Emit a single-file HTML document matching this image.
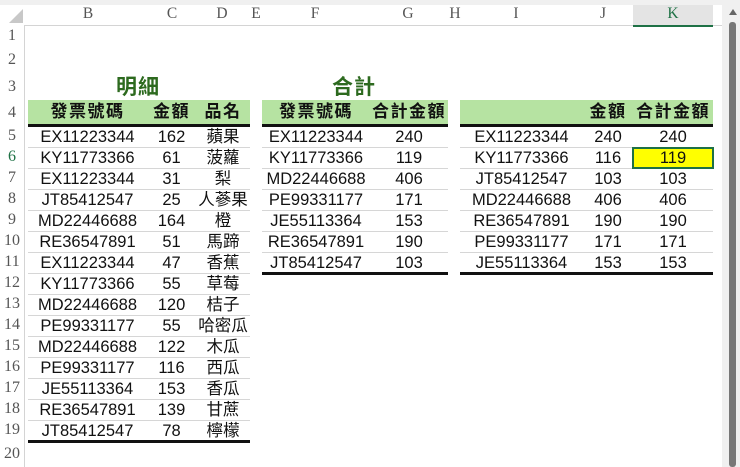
<!DOCTYPE html><html><head><meta charset="utf-8"><style>
body{margin:0;width:740px;height:467px;background:#fff;position:relative;overflow:hidden;font-family:"Liberation Sans","Noto Sans CJK TC",sans-serif;}
.ab{position:absolute}
.colh{position:absolute;top:0;height:25px;background:#fff;border-bottom:1px solid #d4d4d4;width:722px;left:0}
.ch{position:absolute;top:5px;font-family:"Liberation Serif",serif;font-size:15.5px;color:#555;transform:translateX(-50%)}
.rh{position:absolute;left:0;width:24px;border-right:1px solid #d4d4d4;top:25px;height:442px;background:#fff}
.rn{position:absolute;left:0;width:24px;text-align:center;font-family:"Liberation Serif",serif;font-size:16px;color:#555;transform:translateY(-50%)}
.t{position:absolute;top:100px;font-size:16.5px;color:#111}
.r{display:flex;height:20px;line-height:21px;border-bottom:1px solid #d6d6d6}
.r div{text-align:center;white-space:nowrap}
.h{height:24px;line-height:24px;background:#b6e3a2;font-weight:bold;border-bottom:3px solid #111;font-size:17px;letter-spacing:1.5px}
.last{border-bottom:3px solid #111;height:19px}
.title{position:absolute;top:71px;font-size:21px;font-weight:bold;color:#2d6a1f;letter-spacing:1px}
</style></head><body>
<div class="colh"></div>
<div class="ab" style="left:633px;top:4px;width:80px;height:21px;background:#e4e4e4;border-bottom:2px solid #1e7145"></div>
<div class="ab" style="left:0;top:0;width:740px;height:5px;background:#f0f0f0"></div>
<svg class="ab" style="left:8px;top:8px" width="16" height="16"><polygon points="15,1 15,15 1,15" fill="#c8c8c8"/></svg>
<div class="ch" style="left:88px">B</div><div class="ch" style="left:172px">C</div><div class="ch" style="left:222px">D</div><div class="ch" style="left:256px">E</div><div class="ch" style="left:315px">F</div><div class="ch" style="left:408px">G</div><div class="ch" style="left:455px">H</div><div class="ch" style="left:516px">I</div><div class="ch" style="left:603px">J</div><div class="ch" style="left:673px;color:#1e7145">K</div>
<div class="rh"></div>
<div class="rn" style="top:36px">1</div><div class="rn" style="top:60px">2</div><div class="rn" style="top:87px">3</div><div class="rn" style="top:113px">4</div>
<div class="rn" style="top:136px">5</div><div class="rn" style="top:157px;color:#1e7145">6</div><div class="rn" style="top:178px">7</div><div class="rn" style="top:199px">8</div><div class="rn" style="top:220px">9</div><div class="rn" style="top:241px">10</div><div class="rn" style="top:262px">11</div><div class="rn" style="top:283px">12</div><div class="rn" style="top:304px">13</div><div class="rn" style="top:325px">14</div><div class="rn" style="top:346px">15</div><div class="rn" style="top:367px">16</div><div class="rn" style="top:388px">17</div><div class="rn" style="top:409px">18</div><div class="rn" style="top:430px">19</div><div class="rn" style="top:454px">20</div>
<div class="ab" style="left:722px;top:0;width:18px;height:467px;background:#f0f0f0"></div>
<svg class="ab" style="left:728px;top:8px" width="10" height="8"><polygon points="5,1 9,7 1,7" fill="#666"/></svg>
<div class="ab" style="left:729px;top:22px;width:7px;height:445px;background:#777;border-radius:3px"></div>
<div class="title" style="left:116px">明細</div>
<div class="title" style="left:332px">合計</div>
<div class="t" style="left:28px;width:222px">
<div class="r h"><div style="width:119px">發票號碼</div><div style="width:49px">金額</div><div style="width:54px">品名</div></div>
<div class="r"><div style="width:119px">EX11223344</div><div style="width:49px">162</div><div style="width:54px">蘋果</div></div>
<div class="r"><div style="width:119px">KY11773366</div><div style="width:49px">61</div><div style="width:54px">菠蘿</div></div>
<div class="r"><div style="width:119px">EX11223344</div><div style="width:49px">31</div><div style="width:54px">梨</div></div>
<div class="r"><div style="width:119px">JT85412547</div><div style="width:49px">25</div><div style="width:54px">人蔘果</div></div>
<div class="r"><div style="width:119px">MD22446688</div><div style="width:49px">164</div><div style="width:54px">橙</div></div>
<div class="r"><div style="width:119px">RE36547891</div><div style="width:49px">51</div><div style="width:54px">馬蹄</div></div>
<div class="r"><div style="width:119px">EX11223344</div><div style="width:49px">47</div><div style="width:54px">香蕉</div></div>
<div class="r"><div style="width:119px">KY11773366</div><div style="width:49px">55</div><div style="width:54px">草莓</div></div>
<div class="r"><div style="width:119px">MD22446688</div><div style="width:49px">120</div><div style="width:54px">桔子</div></div>
<div class="r"><div style="width:119px">PE99331177</div><div style="width:49px">55</div><div style="width:54px">哈密瓜</div></div>
<div class="r"><div style="width:119px">MD22446688</div><div style="width:49px">122</div><div style="width:54px">木瓜</div></div>
<div class="r"><div style="width:119px">PE99331177</div><div style="width:49px">116</div><div style="width:54px">西瓜</div></div>
<div class="r"><div style="width:119px">JE55113364</div><div style="width:49px">153</div><div style="width:54px">香瓜</div></div>
<div class="r"><div style="width:119px">RE36547891</div><div style="width:49px">139</div><div style="width:54px">甘蔗</div></div>
<div class="r last"><div style="width:119px">JT85412547</div><div style="width:49px">78</div><div style="width:54px">檸檬</div></div>
</div>
<div class="t" style="left:262px;width:186px">
<div class="r h"><div style="width:108px">發票號碼</div><div style="width:78px">合計金額</div></div>
<div class="r"><div style="width:108px">EX11223344</div><div style="width:78px">240</div></div>
<div class="r"><div style="width:108px">KY11773366</div><div style="width:78px">119</div></div>
<div class="r"><div style="width:108px">MD22446688</div><div style="width:78px">406</div></div>
<div class="r"><div style="width:108px">PE99331177</div><div style="width:78px">171</div></div>
<div class="r"><div style="width:108px">JE55113364</div><div style="width:78px">153</div></div>
<div class="r"><div style="width:108px">RE36547891</div><div style="width:78px">190</div></div>
<div class="r last"><div style="width:108px">JT85412547</div><div style="width:78px">103</div></div>
</div>
<div class="t" style="left:460px;width:253px">
<div class="r h"><div style="width:123px"></div><div style="width:50px">金額</div><div style="width:80px">合計金額</div></div>
<div class="r"><div style="width:123px">EX11223344</div><div style="width:50px">240</div><div style="width:80px">240</div></div>
<div class="r"><div style="width:123px">KY11773366</div><div style="width:50px">116</div><div style="width:80px;background:#ffff00;outline:2px solid #1e7145;outline-offset:-1px">119</div></div>
<div class="r"><div style="width:123px">JT85412547</div><div style="width:50px">103</div><div style="width:80px">103</div></div>
<div class="r"><div style="width:123px">MD22446688</div><div style="width:50px">406</div><div style="width:80px">406</div></div>
<div class="r"><div style="width:123px">RE36547891</div><div style="width:50px">190</div><div style="width:80px">190</div></div>
<div class="r"><div style="width:123px">PE99331177</div><div style="width:50px">171</div><div style="width:80px">171</div></div>
<div class="r last"><div style="width:123px">JE55113364</div><div style="width:50px">153</div><div style="width:80px">153</div></div>
</div>
</body></html>
